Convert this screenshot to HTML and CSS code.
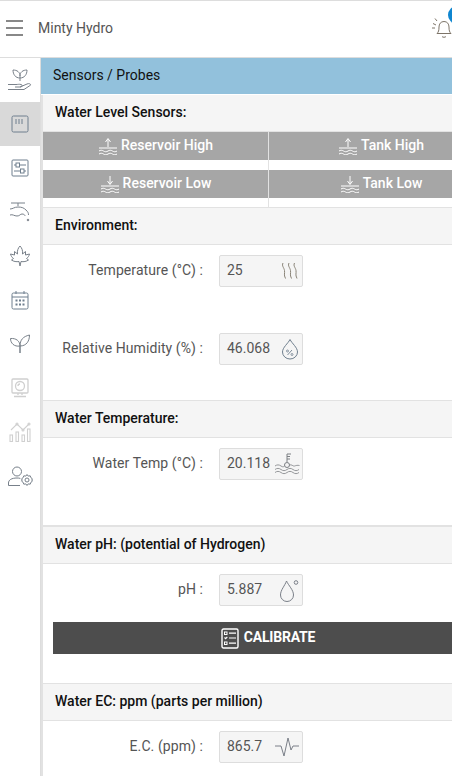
FILE: index.html
```html
<!DOCTYPE html>
<html lang="en">
<head>
  <meta charset="UTF-8" />
  <meta name="viewport" content="width=device-width, initial-scale=1.0"/>
  <title>Minty Hydro</title>
  <link rel="stylesheet" href="styles.css">
</head>
<body>
  <header class="topbar">
    <div class="hamburger"><span></span><span></span><span></span></div>
    <div class="brand">Minty Hydro</div>
    <div class="bell">
      <svg width="22" height="22" viewBox="0 0 22 22" fill="none" stroke="#7d7468" stroke-width="1">
        <path d="M2 6.500 5 8M1 11h3M4 1.500 6 4"/>
        <path d="M6 16.500c1.500-1.500 2-3 2-6.500 0-3 1.700-5.500 5-5.500s5 2.500 5 5.500c0 3.500.5 5 2 6.500z"/>
        <path d="M11 19.500c.8 1 3.200 1 4 0"/>
      </svg>
      <span class="badge"></span>
    </div>
  </header>

  <div class="layout">
    <nav class="sidebar">
      <a class="nav-item">
        <svg width="26" height="24" viewBox="0 0 26 24" fill="none" stroke="#79818a">
          <path d="M13 10C8.500 10 6 6.500 6 2c4 0 7 2 7 6v5M13 10c4.500 0 7-3.500 7-8-4 0-7 2-7 6"/>
          <path d="M1 16.500h8c2 0 3-.5 5 0s1.500 2.500-1 2.500H8M13 19l7-3c2.300-1 4 .2 3.500 1.200L17 21.500H1"/>
        </svg>
      </a>
      <a class="nav-item active">
        <svg width="18" height="18" viewBox="0 0 18 18" fill="none" stroke="#6f7f8e">
          <rect x="1" y="1" width="16" height="16" rx="1.500"/>
          <path d="M5 4v5M8 4v5M11 4v5"/>
        </svg>
      </a>
      <a class="nav-item">
        <svg width="18" height="18" viewBox="0 0 18 18" fill="none" stroke="#6f7f8e">
          <rect x="1" y="1" width="16" height="16" rx="1"/>
          <path d="M3 6h2M9 6h6M3 12h6M13 12h2"/>
          <rect x="5" y="4" width="3.500" height="4"/>
          <rect x="9.500" y="10" width="3.500" height="4"/>
        </svg>
      </a>
      <a class="nav-item">
        <svg width="24" height="22" viewBox="0 0 24 22" fill="none" stroke="#79818a">
          <path d="M3 2h14M10 2v3"/>
          <path d="M2 8c3 0 4-2 8-2s6 1 8 3 2.500 3 2.500 5"/>
          <path d="M2 14c3-1 4 1 7 1s3-2 5-2 3 1 3 2"/>
          <circle cx="20" cy="19" r=".8" fill="#79818a"/>
        </svg>
      </a>
      <a class="nav-item">
        <svg width="22" height="22" viewBox="0 0 22 22" fill="none" stroke="#79818a">
          <path d="M11 1c-2 2-3 5-2.500 8L5.500 6.500 5.500 10 1.500 9c.5 2 1.500 3.500 3 4.500L2.500 15c2 1.500 5 2 7.500 1.500L11 21l1-4.500c2.500.5 5.500 0 7.500-1.500l-2-1.500c1.500-1 2.500-2.500 3-4.500l-4 1V6.500L13.500 9C14 6 13 3 11 1z"/>
        </svg>
      </a>
      <a class="nav-item">
        <svg width="18" height="20" viewBox="0 0 18 20" fill="none" stroke="#6f7f8e">
          <rect x="1" y="3" width="16" height="16" rx="1.500"/>
          <path d="M1 7h16M5 1v3M13 1v3"/>
          <path d="M4.500 10.500h2M8 10.500h2M11.500 10.500h2M4.500 14.500h2M8 14.500h2M11.500 14.500h2" stroke-width="2"/>
        </svg>
      </a>
      <a class="nav-item">
        <svg width="22" height="20" viewBox="0 0 22 20" fill="none" stroke="#79818a">
          <path d="M11 19v-7C11 7 7 4 1.500 4.500 1.500 9 5 13 11 12z"/>
          <path d="M11 12c0-6 3-9.500 9.500-11 0 6-3 11-9.500 11z"/>
        </svg>
      </a>
      <a class="nav-item">
        <svg width="18" height="20" viewBox="0 0 18 20" fill="none" stroke="#cfcfcf" stroke-width="1.300">
          <rect x="1" y="1" width="16" height="14" rx="1"/>
          <circle cx="9" cy="8" r="4.500"/>
          <path d="M7 8a2 2 0 0 1 2-2M7 15v2M11 15v2M3 18.500h12"/>
        </svg>
      </a>
      <a class="nav-item">
        <svg width="22" height="20" viewBox="0 0 22 20" fill="none" stroke="#d0d0d0" stroke-width="1.100">
          <rect x="1" y="13" width="2.500" height="6.500"/>
          <rect x="7" y="10" width="2.500" height="9.500"/>
          <rect x="13" y="13" width="2.500" height="6.500"/>
          <rect x="18.500" y="7" width="2.500" height="12.500"/>
          <path d="M2 8l6-6 6 6 6-6"/>
          <circle cx="8" cy="2" r="1"/><circle cx="14" cy="8" r="1"/><circle cx="20" cy="2" r="1"/>
        </svg>
      </a>
      <a class="nav-item">
        <svg width="26" height="22" viewBox="0 0 26 22" fill="none" stroke="#77808a">
          <circle cx="10" cy="6.500" r="4.500"/>
          <path d="M1.500 20.500v-2.500c0-3 3-5 8.500-5 1.200 0 2.300.1 3.300.4M1.500 20.500h11.500"/>
          <circle cx="20" cy="15" r="2"/>
          <path d="M20 9.500l1.200 1.600 2-.3.700 1.900 1.600 1.200-.8 1.100.8 1.100-1.600 1.200-.7 1.900-2-.3L20 20.500l-1.200-1.600-2 .3-.7-1.900-1.600-1.200.8-1.100-.8-1.100 1.600-1.200.7-1.900 2 .3z"/>
        </svg>
      </a>
    </nav>

    <main class="content">
      <h1 class="page-title">Sensors / Probes</h1>

      <div class="panel">
        <section class="block block-levels">
          <h2 class="block-title">Water Level Sensors:</h2>
          <div class="level-grid">
            <div class="level-cell">
              <button class="level-btn">
                <svg width="20" height="18" viewBox="0 0 20 18" fill="none" stroke="#fff">
                  <path d="M10 10V2M7.500 5 10 1.500 12.500 5M1 11h18M1 14c1.500-1 3-1 4.500 0s3 1 4.500 0 3-1 4.500 0 3 1 4.500 0M1 17c1.500-1 3-1 4.500 0s3 1 4.500 0 3-1 4.500 0 3 1 4.500 0"/>
                </svg>
                <span>Reservoir High</span>
              </button>
            </div>
            <div class="level-cell">
              <button class="level-btn">
                <svg width="20" height="18" viewBox="0 0 20 18" fill="none" stroke="#fff">
                  <path d="M10 10V2M7.500 5 10 1.500 12.500 5M1 11h18M1 14c1.500-1 3-1 4.500 0s3 1 4.500 0 3-1 4.500 0 3 1 4.500 0M1 17c1.500-1 3-1 4.500 0s3 1 4.500 0 3-1 4.500 0 3 1 4.500 0"/>
                </svg>
                <span>Tank High</span>
              </button>
            </div>
            <div class="level-cell">
              <button class="level-btn">
                <svg width="20" height="18" viewBox="0 0 20 18" fill="none" stroke="#fff">
                  <path d="M10 1v8M7.500 6 10 9.500 12.500 6M1 11h18M1 14c1.500-1 3-1 4.500 0s3 1 4.500 0 3-1 4.500 0 3 1 4.500 0M1 17c1.500-1 3-1 4.500 0s3 1 4.500 0 3-1 4.500 0 3 1 4.500 0"/>
                </svg>
                <span>Reservoir Low</span>
              </button>
            </div>
            <div class="level-cell">
              <button class="level-btn">
                <svg width="20" height="18" viewBox="0 0 20 18" fill="none" stroke="#fff">
                  <path d="M10 1v8M7.500 6 10 9.500 12.500 6M1 11h18M1 14c1.500-1 3-1 4.500 0s3 1 4.500 0 3-1 4.500 0 3 1 4.500 0M1 17c1.500-1 3-1 4.500 0s3 1 4.500 0 3-1 4.500 0 3 1 4.500 0"/>
                </svg>
                <span>Tank Low</span>
              </button>
            </div>
          </div>
        </section>

        <section class="block">
          <h2 class="block-title">Environment:</h2>
          <div class="reading">
            <label class="reading-label">Temperature (°C) :</label>
            <div class="reading-box">
              <span>25</span>
              <svg width="18" height="18" viewBox="0 0 18 18" fill="none" stroke="#8a8478">
                <path d="M2 1C.5 4 3 5.500 3.500 8.500S2.500 12.500 4.500 16.500M8 1C6.500 4 9 5.500 9.500 8.500S8.500 12.500 10.500 16.500M13.500 1C12 4 14.500 5.500 15 8.500S14 12.500 16 16.500"/>
              </svg>
            </div>
          </div>
          <div class="reading reading-last">
            <label class="reading-label">Relative Humidity (%) :</label>
            <div class="reading-box">
              <span>46.068</span>
              <svg width="18" height="22" viewBox="0 0 18 22" fill="none" stroke="#6f7f8e">
                <path d="M9 1.500c-2 4-7.500 8-7.500 12.500a7.500 7 0 0 0 15 0C16.500 9.500 11 5.500 9 1.500z"/>
                <path d="M6.500 17l4.500-5" stroke-width=".9"/>
                <circle cx="6.500" cy="13" r="1" stroke-width=".8"/><circle cx="11" cy="16.500" r="1" stroke-width=".8"/>
              </svg>
            </div>
          </div>
        </section>

        <section class="block">
          <h2 class="block-title">Water Temperature:</h2>
          <div class="reading reading-single">
            <label class="reading-label">Water Temp (°C) :</label>
            <div class="reading-box">
              <span>20.118</span>
              <svg class="wide-icon" width="26" height="22" viewBox="0 0 26 22" fill="none" stroke="#7d8084">
                <path d="M13 9V1h4M13 3.500h3M13 6h3"/>
                <circle cx="13" cy="12" r="2.500"/>
                <path d="M1 13c2-1.500 4-1.500 6 0s3 .5 3.500 0M15.500 12c2-1 3.500 1.500 5 1s3-1 5-.5M1 16.500c2-1.500 4-1.500 6 0s4 1.500 6 0 4-1.500 6 0 4 1.500 6 0M1 19.500c2-1.500 4-1.500 6 0s4 1.500 6 0 4-1.500 6 0 4 1.500 6 0" stroke-width=".8"/>
              </svg>
            </div>
          </div>
        </section>

        <section class="block block-thick">
          <h2 class="block-title">Water pH: (potential of Hydrogen)</h2>
          <div class="reading">
            <label class="reading-label">pH :</label>
            <div class="reading-box">
              <span>5.887</span>
              <svg width="20" height="24" viewBox="0 0 20 24" fill="none" stroke="#7a7f88">
                <path d="M7.500 3c-1.500 4.500-6 9-6 14a6.500 6.500 0 0 0 13 0c0-5-5-9.500-7-14z"/>
                <circle cx="17" cy="4.500" r="1.800"/>
              </svg>
            </div>
          </div>
          <div class="calibrate-wrap">
            <button class="calibrate-btn">
              <svg width="18" height="21" viewBox="0 0 18 21" fill="none" stroke="#fff">
                <rect x="1" y="1" width="16" height="19" rx="1.500" stroke-width="1.400"/>
                <rect x="3.500" y="4" width="2.500" height="2.500"/>
                <rect x="3.500" y="14" width="2.500" height="2.500"/>
                <path d="M3.500 9.500l1.200 1.200 1.600-1.800M8 5.200h7M8 10h7M8 15.200h7" stroke-width="1.200"/>
              </svg>
              <span>CALIBRATE</span>
            </button>
          </div>
        </section>

        <section class="block block-end">
          <h2 class="block-title">Water EC: ppm (parts per million)</h2>
          <div class="reading reading-end">
            <label class="reading-label">E.C. (ppm) :</label>
            <div class="reading-box">
              <span>865.7</span>
              <svg class="wide-icon" width="26" height="20" viewBox="0 0 26 20" fill="none" stroke="#7a7f88">
                <path d="M1 9h6l3 10 4-18 3 12 2-4h6"/>
              </svg>
            </div>
          </div>
        </section>
      </div>
    </main>
  </div>
</body>
</html>
```

FILE: styles.css
```css
* {
  margin: 0;
  padding: 0;
  box-sizing: border-box;
  font-family: Roboto, 'Liberation Sans', sans-serif;
}

html,
body {
  height: 100%;
  overflow: hidden;
}

body {
  background: #fff;
  color: #555;
  font-size: 14px;
}

.topbar {
  display: flex;
  align-items: center;
  height: 58px;
  border-top: 1px solid #ddd;
  border-bottom: 1px solid #ddd;
  padding: 0 0 2px 6px;
  position: relative;
}

.hamburger {
  display: flex;
  flex-direction: column;
  gap: 5px;
  width: 17px;
}

.hamburger span {
  height: 2px;
  background: #888;
}

.brand {
  margin-left: 15px;
  font-size: 14px;
  color: #555;
}

.bell {
  margin-left: auto;
  width: 21px;
  height: 22px;
}

.badge {
  position: absolute;
  top: 5px;
  left: 448px;
  width: 18px;
  height: 18px;
  border-radius: 50%;
  background: #0f86d0;
}

.layout {
  display: flex;
  height: 718px;
}

.sidebar {
  flex: none;
  width: 41px;
  border-right: 1px solid #ddd;
}

.nav-item {
  display: flex;
  align-items: center;
  justify-content: center;
  height: 44px;
}

.nav-item.active {
  background: #d9d9d9;
}

.content {
  flex: none;
  width: 452px;
}

.page-title {
  height: 37px;
  padding: 0 12px;
  background: #92c1dc;
  color: #111;
  font-size: 14px;
  font-weight: 400;
  line-height: 34px;
  border-bottom: 1px solid #fff;
}

.panel {
  border-left: 2px solid #e2e2e2;
}

.block {
  border-bottom: 1px solid #e2e2e2;
}

.block-thick {
  border-top: 1px solid #e2e2e2;
}

.block-end {
  border-bottom: none;
}

.block-title {
  height: 37px;
  padding: 0 12px;
  background: #f5f5f5;
  border-bottom: 1px solid #e2e2e2;
  color: #111;
  font-size: 14px;
  font-weight: 500;
  line-height: 34px;
}

.level-grid {
  display: grid;
  grid-template-columns: 226px 224px;
}

.level-cell {
  padding-bottom: 10px;
}

.level-cell:nth-child(odd) {
  border-right: 1px solid #e2e2e2;
}

.level-btn {
  display: flex;
  align-items: center;
  justify-content: center;
  gap: 3px;
  width: 100%;
  height: 28px;
  border: none;
  background: #a6a6a6;
  color: #fff;
  font-size: 14px;
  font-weight: 500;
}

.level-btn span,
.calibrate-btn span,
.reading-label,
.reading-box span {
  margin-bottom: 2px;
}

.level-grid .level-cell:nth-child(n+3) {
  padding-bottom: 9px;
}

.reading {
  display: flex;
  align-items: center;
  gap: 16px;
  padding-top: 10px;
}

.reading-last {
  padding-top: 46px;
  padding-bottom: 35px;
}

.reading-single {
  padding-bottom: 45px;
}

.reading-end {
  padding-bottom: 20px;
}

.reading-label {
  width: 160px;
  text-align: right;
  color: #555;
  letter-spacing: .08px;
}

.reading-box {
  display: flex;
  align-items: center;
  justify-content: space-between;
  width: 84px;
  height: 32px;
  padding: 0 3px 0 7px;
  background: #f5f5f5;
  border: 1px solid #ddd;
  border-radius: 2px;
  color: #555;
}

.wide-icon {
  flex: none;
  margin-right: -1px;
}

.calibrate-wrap {
  padding: 16px 10px 29px;
}

.calibrate-btn {
  display: flex;
  align-items: center;
  justify-content: center;
  gap: 5px;
  width: 100%;
  height: 32px;
  border: none;
  background: #4d4d4d;
  color: #fff;
  font-size: 14px;
  font-weight: 700;
  letter-spacing: -.2px;
}
```
